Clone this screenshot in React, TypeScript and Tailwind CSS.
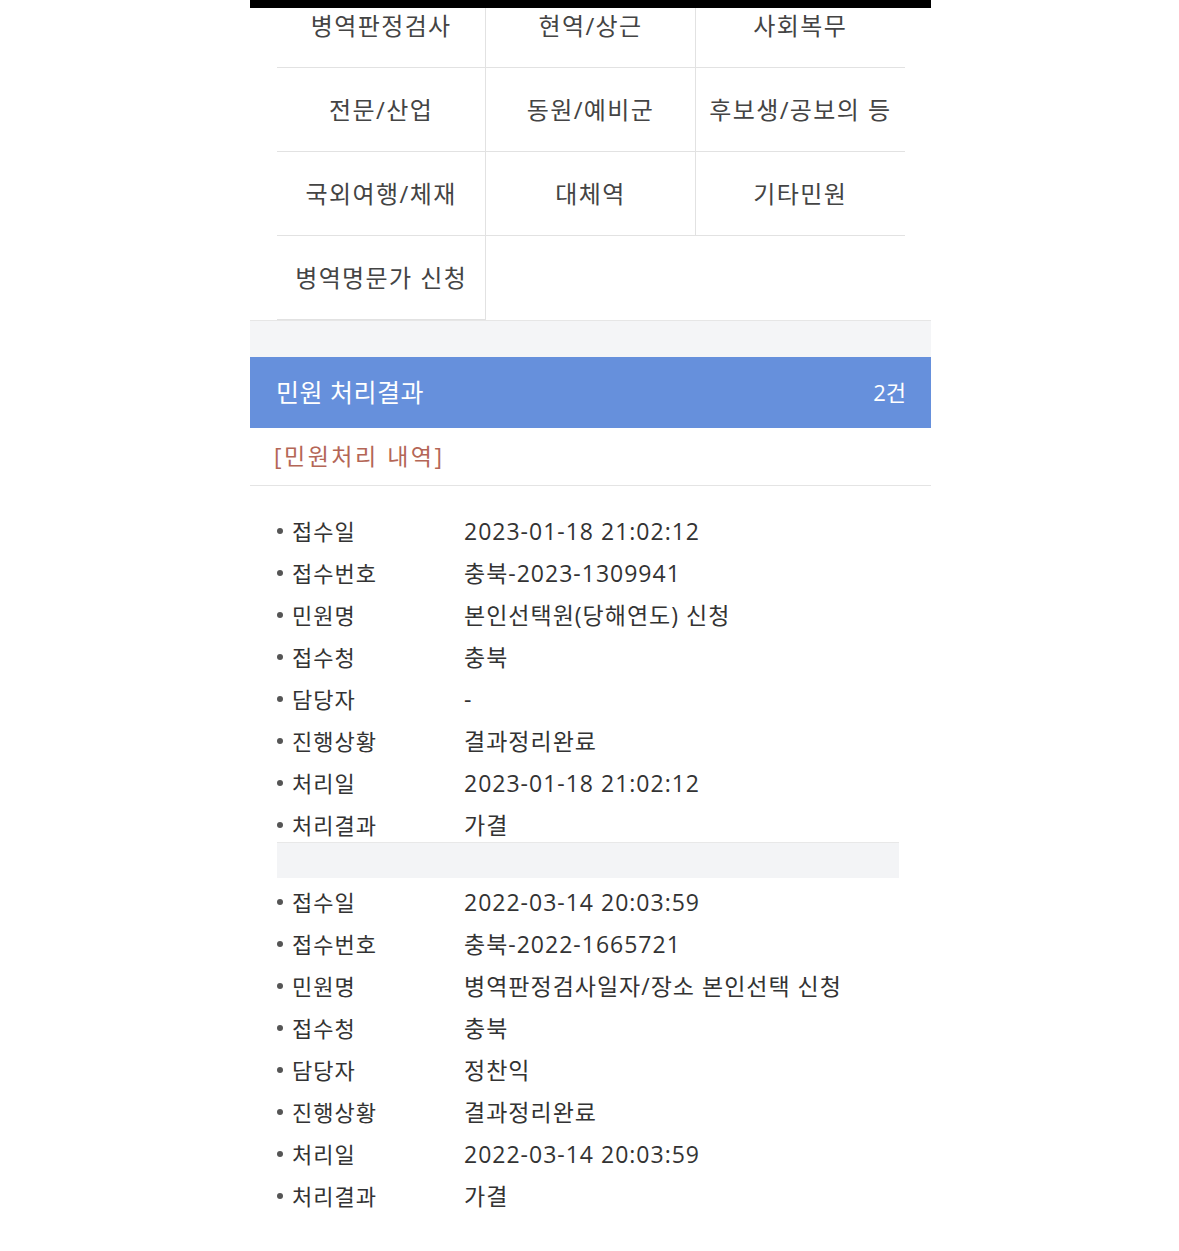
import React from "react";

const menu = [
  "병역판정검사",
  "현역/상근",
  "사회복무",
  "전문/산업",
  "동원/예비군",
  "후보생/공보의 등",
  "국외여행/체재",
  "대체역",
  "기타민원",
  "병역명문가 신청",
];

const groups: [string, string][][] = [
  [
    ["접수일", "2023-01-18 21:02:12"],
    ["접수번호", "충북-2023-1309941"],
    ["민원명", "본인선택원(당해연도) 신청"],
    ["접수청", "충북"],
    ["담당자", "-"],
    ["진행상황", "결과정리완료"],
    ["처리일", "2023-01-18 21:02:12"],
    ["처리결과", "가결"],
  ],
  [
    ["접수일", "2022-03-14 20:03:59"],
    ["접수번호", "충북-2022-1665721"],
    ["민원명", "병역판정검사일자/장소 본인선택 신청"],
    ["접수청", "충북"],
    ["담당자", "정찬익"],
    ["진행상황", "결과정리완료"],
    ["처리일", "2022-03-14 20:03:59"],
    ["처리결과", "가결"],
  ],
];

function Row({ label, value }: { label: string; value: string }) {
  return (
    <div className="flex h-[42px] items-center text-[#333]">
      <span className="ml-[27px] mr-[9px] h-[6px] w-[6px] rounded-full bg-[#555]" />
      <span className="w-[172px] text-[22px] tracking-[1px]">{label}</span>
      <span className="text-[23px] tracking-[1px]">{value}</span>
    </div>
  );
}

export default function App() {
  return (
    <div className="min-h-[1251px] w-full bg-white font-['Open_Sans','Noto_Sans_CJK_KR',sans-serif]">
      <div className="ml-[250px] w-[681px] overflow-hidden bg-white">
        <div className="relative z-10 h-[8px] bg-black" />
        <div className="ml-[27px] mt-[-24px] grid w-[628px] grid-cols-3">
          {menu.map((m, i) => (
            <div
              key={m}
              className={
                "flex h-[84px] items-center justify-center border-b border-[#e2e2e2] text-[24px] tracking-[1.4px] text-[#444] " +
                (i % 3 !== 2 ? "border-r" : "")
              }
            >
              {m}
            </div>
          ))}
        </div>
        <div className="h-[37px] border-t border-[#e6e6e6] bg-[#f4f5f7]" />
        <div className="flex h-[71px] items-center justify-between bg-[#6690dc] pl-[26px] pr-[25px] text-white">
          <span className="text-[25px] tracking-[0.5px]">민원 처리결과</span>
          <span className="text-[22px]">2건</span>
        </div>
        <div className="flex h-[58px] items-center border-b border-[#e4e4e4] px-[24px] text-[23px] tracking-[2.5px] text-[#b46656]">
          [민원처리 내역]
        </div>
        <div className="pt-[24px]">
          {groups[0].map(([l, v]) => (
            <Row key={"a" + l} label={l} value={v} />
          ))}
          <div className="ml-[27px] mt-[-4px] mb-[3px] h-[36px] w-[622px] border-t border-[#e8e8e8] bg-[#f3f4f6]" />
          {groups[1].map(([l, v]) => (
            <Row key={"b" + l} label={l} value={v} />
          ))}
        </div>
      </div>
    </div>
  );
}
